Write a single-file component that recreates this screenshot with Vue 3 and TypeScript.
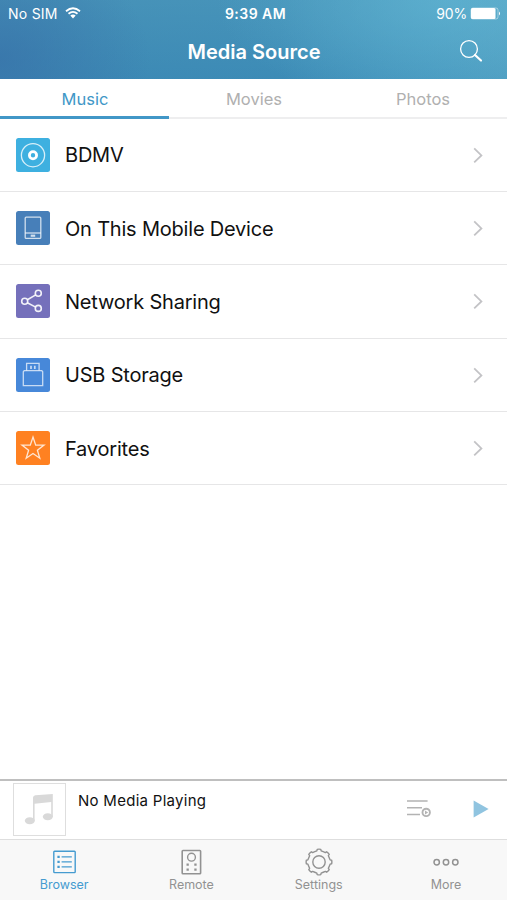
<script setup lang="ts">
import { ref } from 'vue'

interface Source {
  id: string
  name: string
}

const tabs: string[] = ['Music', 'Movies', 'Photos']
const activeTab = ref<string>('Music')

const sources: Source[] = [
  { id: 'disc', name: 'BDMV' },
  { id: 'device', name: 'On This Mobile Device' },
  { id: 'network', name: 'Network Sharing' },
  { id: 'usb', name: 'USB Storage' },
  { id: 'favorite', name: 'Favorites' },
]

const navItems: string[] = ['Browser', 'Remote', 'Settings', 'More']
const activeNav = ref<string>('Browser')

// Outline of an eight-toothed gear centred on (14, 14)
function gearPath(): string {
  const at = (deg: number, r: number): string => {
    const a = ((deg - 90) * Math.PI) / 180
    return `${(14 + r * Math.cos(a)).toFixed(2)} ${(14 + r * Math.sin(a)).toFixed(2)}`
  }
  let d = `M${at(-8, 12.8)}`
  for (let i = 0; i < 8; i++) {
    const c = i * 45
    d += `Q${at(c, 13.1)} ${at(c + 8, 12.8)}L${at(c + 11, 11.3)}Q${at(c + 22.5, 11.1)} ${at(c + 34, 11.3)}L${at(c + 37, 12.8)}`
  }
  return d + 'Z'
}
const gear = gearPath()
</script>

<template>
  <div class="screen">
    <header class="header">
      <div class="status">
        <div class="carrier">
          <span class="sim">No SIM</span>
          <svg class="wifi" width="16" height="12" viewBox="0 0 16 12">
            <g fill="none" stroke="#fff" stroke-width="1.8">
              <path d="M1 4.2Q8-1.8 15 4.2" />
              <path d="M3.5 6.8Q8 3 12.5 6.8" />
            </g>
            <path d="M5.3 8.6Q8 6.6 10.7 8.6L8 11.4Z" fill="#fff" />
          </svg>
        </div>
        <span class="clock">9:39 AM</span>
        <div class="power">
          <span class="percent">90%</span>
          <svg width="31" height="13" viewBox="0 0 31 13">
            <rect x="1" y="1" width="27" height="11" rx="2" fill="none" stroke="#fff" stroke-opacity=".55" stroke-width=".8" />
            <rect x="1" y="1" width="24.5" height="11" rx="1.5" fill="#fff" />
            <path d="M29 4.5Q31 6.5 29 8.5Z" fill="#fff" />
          </svg>
        </div>
      </div>
      <div class="titlebar">
        <h1 class="title">Media Source</h1>
        <svg class="search" width="24" height="24" viewBox="0 0 24 24" fill="none" stroke="#fff">
          <circle cx="10" cy="10" r="8.4" stroke-width="1.3" />
          <path d="M16 16L22 21.5" stroke-width="2.2" stroke-linecap="round" />
        </svg>
      </div>
    </header>

    <nav class="tabs">
      <button v-for="t in tabs" :key="t" class="tab" :class="{ active: t === activeTab }" @click="activeTab = t">
        <span>{{ t }}</span>
      </button>
    </nav>

    <main class="list">
      <div v-for="s in sources" :key="s.id" class="row">
        <div class="tile" :class="s.id">
          <svg width="34" height="34" viewBox="0 0 34 34" fill="none" stroke="#fff" stroke-width="1.3">
            <template v-if="s.id === 'disc'">
              <circle cx="17" cy="17.2" r="11.6" stroke-opacity=".8" />
              <circle cx="17" cy="17.2" r="3.6" stroke-width="2.8" />
            </template>
            <g v-else-if="s.id === 'device'" stroke-opacity=".75">
              <rect x="9.2" y="6.2" width="15.6" height="21.2" rx="1" />
              <path d="M9.2 22H24.8" />
              <path d="M14.7 24.7H19.2" stroke-width="2.2" />
            </g>
            <g v-else-if="s.id === 'network'" stroke-width="1.6" stroke-opacity=".9">
              <circle cx="8.7" cy="17.2" r="3" />
              <circle cx="22.3" cy="9.3" r="3" />
              <circle cx="22.3" cy="24.4" r="3" />
              <path d="M11.4 15.7L19.7 10.9M11.3 18.7L19.7 23.1" />
            </g>
            <g v-else-if="s.id === 'usb'" stroke-opacity=".7">
              <path d="M8.2 12.6H25.8L26.7 13.8V27.7H7.3V13.8Z" />
              <path d="M10.6 12.6V5.3H23.1V12.6" />
              <path d="M15 7.7V11M18.8 7.7V11" stroke-width="1.7" />
            </g>
            <path v-else stroke-opacity=".8" d="M17 6L19.7 14.1H28L21.4 19.2L23.8 27.2L17 22.5L10.2 27.2L12.6 19.2L6 14.1H14.3Z" />
          </svg>
        </div>
        <span class="name">{{ s.name }}</span>
        <svg class="chevron" width="12" height="18" viewBox="0 0 12 18">
          <path d="M2.2 2.4L9.4 9.4L2.2 16.4" fill="none" stroke="#c3c3c6" stroke-width="1.8" />
        </svg>
      </div>
    </main>

    <section class="player">
      <div class="cover">
        <svg width="50" height="50" viewBox="0 0 50 50" fill="#d9d9d9">
          <ellipse cx="15.8" cy="36.7" rx="5" ry="3.5" />
          <ellipse cx="33.8" cy="32.8" rx="5" ry="3.5" />
          <path d="M19 36.7V13.4Q19.3 11.6 21.3 11.3L38.8 10V33H37.2V18L20.6 19.7V36.7Z" />
        </svg>
      </div>
      <span class="playing">No Media Playing</span>
      <svg class="queue" width="26" height="20" viewBox="0 0 26 20" fill="none" stroke="#b3b3b3" stroke-width="1.5">
        <path d="M1 3H21.6M1 9.8H16M1 16.6H14" />
        <circle cx="20.2" cy="14.4" r="3.7" stroke-width="1.9" />
        <path d="M19 12.4L22.1 14.4L19 16.4Z" fill="#b3b3b3" stroke="none" />
      </svg>
      <svg class="play" width="16" height="18" viewBox="0 0 16 18">
        <path d="M.6.4L15.6 9L.6 17.6Z" fill="#90c4e0" />
      </svg>
    </section>

    <footer class="bottom">
      <button v-for="n in navItems" :key="n" class="item" :class="{ active: n === activeNav }" @click="activeNav = n">
        <svg width="28" height="28" viewBox="0 0 28 28" fill="none" stroke="currentColor" stroke-width="1.4">
          <template v-if="n === 'Browser'">
            <rect x="3.8" y="3.2" width="21.4" height="21.4" rx=".8" />
            <path d="M11.6 8.9H21.8M11.6 13.9H21.8M11.6 18.9H21.8" />
            <path d="M7.4 8.9H9.7M7.4 13.9H9.7M7.4 18.9H9.7" stroke-width="2.2" />
          </template>
          <template v-else-if="n === 'Remote'">
            <rect x="5.2" y="2.5" width="18.4" height="23.2" rx=".8" stroke-width="1.6" />
            <circle cx="14.5" cy="9.2" r="3.9" />
            <path d="M9.5 16.7H11.8M17.3 16.7H19.6M9.5 21.7H11.8M17.3 21.7H19.6" stroke-width="2.3" />
          </template>
          <template v-else-if="n === 'Settings'">
            <path :d="gear" stroke-linejoin="round" />
            <circle cx="14" cy="14" r="6.2" />
          </template>
          <g v-else stroke-width="1.5">
            <circle cx="4.7" cy="14.2" r="2.7" />
            <circle cx="14" cy="14.2" r="2.7" />
            <circle cx="23.3" cy="14.2" r="2.7" />
          </g>
        </svg>
        <span>{{ n }}</span>
      </button>
    </footer>
  </div>
</template>

<style>
body {
  margin: 0;
  background: #fff;
}
</style>

<style scoped>
.screen {
  display: flex;
  flex-direction: column;
  width: 507px;
  height: 900px;
  overflow: hidden;
  background: #fff;
  color: #111;
  font-family: Inter, Roboto, sans-serif;
}
button {
  padding: 0;
  border: 0;
  background: none;
  font: inherit;
  color: inherit;
}
svg {
  display: block;
  flex: none;
}
.header {
  flex: none;
  height: 79px;
  color: #fff;
  background:
    radial-gradient(ellipse 150px 120px at 0 75%, rgba(55, 112, 168, 0.7), rgba(55, 112, 168, 0) 100%),
    radial-gradient(ellipse 230px 110px at 88% 0, rgba(100, 185, 215, 0.55), rgba(100, 185, 215, 0) 100%),
    linear-gradient(180deg, rgba(80, 160, 190, 0.35), rgba(50, 135, 180, 0.3)),
    linear-gradient(90deg, #4189b4 0%, #418db7 55%, #509fc3 85%, #59a6c6 100%);
}
.status,
.titlebar {
  display: grid;
  grid-template-columns: 1fr auto 1fr;
  align-items: center;
}
.status {
  height: 27px;
  padding: 0 6px 0 8px;
  font-size: 14px;
}
.carrier,
.power {
  display: flex;
  align-items: center;
}
.carrier {
  gap: 7px;
}
.sim {
  letter-spacing: 0.25px;
}
.wifi {
  margin-top: -2px;
}
.clock {
  padding-left: 2px;
  font-weight: 600;
  font-size: 14px;
  letter-spacing: 0.45px;
}
.power {
  justify-content: flex-end;
  gap: 3px;
}
.percent {
  letter-spacing: -0.2px;
}
.titlebar {
  height: 50px;
  padding: 0 24px 0 25px;
}
.title {
  grid-column: 2;
  margin: 0;
  font-size: 20px;
  font-weight: 600;
}
.search {
  justify-self: end;
  margin-top: -2px;
}
.tabs {
  flex: none;
  display: grid;
  grid-template-columns: repeat(3, 1fr);
  height: 39.7px;
  box-sizing: border-box;
  box-shadow: inset 0 -2px #eeeeef;
}
.tab {
  border-bottom: 3px solid transparent;
  padding: 3px 0 0 1px;
  font-size: 16.5px;
  color: #b0b0b0;
}
.tab.active {
  color: #4197c7;
  border-color: #4197c7;
}
.list {
  flex: 1;
}
.row {
  display: flex;
  align-items: center;
  box-sizing: border-box;
  height: 73.3px;
  padding: 0 23.5px 0 16px;
  border-bottom: 1px solid #e6e6e7;
}
.tile {
  flex: none;
  width: 34px;
  height: 34px;
  margin-right: 15px;
  border-radius: 2.5px;
}
.tile.disc { background: #3eb0e0; }
.tile.device { background: #477fb9; }
.tile.network { background: #7570bb; }
.tile.usb { background: #4788d9; }
.tile.favorite { background: #ff8121; }
.name {
  flex: 1;
  padding-top: 1px;
  font-size: 20px;
  letter-spacing: -0.2px;
  white-space: nowrap;
}
.player {
  flex: none;
  display: flex;
  box-sizing: border-box;
  height: 60px;
  padding: 2px 18px 0 13px;
  border-top: 2px solid #bfbfbf;
}
.cover {
  width: 51px;
  height: 51px;
  border: 1px solid #dedede;
}
.playing {
  flex: 1;
  margin: 8px 0 0 12px;
  font-size: 15px;
  letter-spacing: 0.28px;
  line-height: 20px;
}
.queue {
  margin: 15px 41px 0 0;
}
.play {
  margin-top: 17px;
}
.bottom {
  flex: none;
  display: grid;
  grid-template-columns: repeat(4, 127.3px);
  box-sizing: border-box;
  height: 61px;
  border-top: 1px solid #dedede;
  background: #f8f8f8;
}
.item {
  display: flex;
  flex-direction: column;
  align-items: center;
  padding: 8px 0 0 1px;
  color: #929292;
  font-size: 12.5px;
  line-height: 15px;
}
.item span {
  margin-top: 1px;
}
.item.active {
  color: #459bd0;
}
</style>
